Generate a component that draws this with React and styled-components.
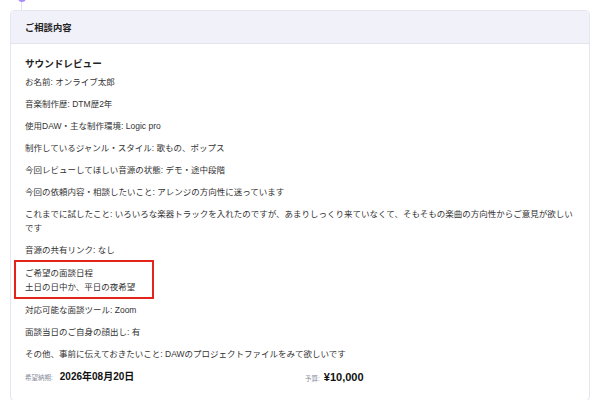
import React from "react";
import styled, { createGlobalStyle } from "styled-components";

const GlobalStyle = createGlobalStyle`
  body {
    margin: 0;
    background: #fff;
    font-family: "Liberation Sans", "Noto Sans CJK JP", sans-serif;
    color: #333;
  }
`;

const Page = styled.div`
  padding: 0 10px;
`;

const Connector = styled.div`
  position: relative;
  width: 1px;
  height: 10px;
  margin-left: 11px;
  background: #e2e2ec;

  &::before {
    content: "";
    position: absolute;
    top: -6px;
    left: -3.5px;
    width: 8px;
    height: 8px;
    border-radius: 50%;
    background: #a78bfa;
  }
`;

const Card = styled.section`
  border: 1px solid #e6e6f0;
  border-radius: 4px;
  overflow: hidden;
`;

const CardHeader = styled.header`
  display: flex;
  align-items: center;
  height: 32px;
  padding: 0 14px;
  background: #f1f1fa;
  border-bottom: 1px solid #e4e4f0;
  font-size: 9.3px;
  font-weight: 700;
  color: #222;
`;

const CardBody = styled.div`
  display: flex;
  flex-direction: column;
  gap: 8px;
  padding: 12px 14px 13px;
`;

const Title = styled.h3`
  margin: 0 0 -5px;
  font-size: 9.6px;
  line-height: 16px;
  font-weight: 700;
  color: #222;
`;

const Item = styled.p`
  position: relative;
  margin: ${(p) => (p.$marked ? "1px 0" : "0")};
  font-size: 8.5px;
  line-height: 14px;
  color: #333;
  white-space: pre-line;
`;

const Marker = styled.span`
  position: absolute;
  top: -6px;
  left: -11px;
  width: 140px;
  height: 39px;
  box-sizing: border-box;
  border: 2px solid #e3241b;
`;

const Summary = styled.div`
  display: grid;
  grid-template-columns: 1fr 1fr;
  gap: 10px;
  line-height: 16px;
`;

const SummaryCell = styled.div`
  display: flex;
  align-items: baseline;
`;

const SummaryLabel = styled.span`
  margin-right: ${(p) => (p.$tight ? "4px" : "7px")};
  font-size: 6.5px;
  color: #8a8fa0;
`;

const SummaryValue = styled.span`
  font-size: ${(p) => (p.$large ? "11px" : "10px")};
  font-weight: 700;
  color: #111;
`;

const items = [
  "お名前: オンライブ太郎",
  "音楽制作歴: DTM歴2年",
  "使用DAW・主な制作環境: Logic pro",
  "制作しているジャンル・スタイル: 歌もの、ポップス",
  "今回レビューしてほしい音源の状態: デモ・途中段階",
  "今回の依頼内容・相談したいこと: アレンジの方向性に迷っています",
  "これまでに試したこと: いろいろな楽器トラックを入れたのですが、あまりしっくり来ていなくて、そもそもの楽曲の方向性からご意見が欲しいです",
  "音源の共有リンク: なし",
  { text: "ご希望の面談日程\n土日の日中か、平日の夜希望", marked: true },
  "対応可能な面談ツール: Zoom",
  "面談当日のご自身の顔出し: 有",
  "その他、事前に伝えておきたいこと: DAWのプロジェクトファイルをみて欲しいです",
];

const App = () => {
  return (
    <Page>
      <GlobalStyle />
      <Connector />
      <Card>
        <CardHeader>ご相談内容</CardHeader>
        <CardBody>
          <Title>サウンドレビュー</Title>
          {items.map((it, i) =>
            typeof it === "string" ? (
              <Item key={i}>{it}</Item>
            ) : (
              <Item key={i} $marked>
                {it.text}
                <Marker />
              </Item>
            )
          )}
          <Summary>
            <SummaryCell>
              <SummaryLabel>希望納期:</SummaryLabel>
              <SummaryValue>2026年08月20日</SummaryValue>
            </SummaryCell>
            <SummaryCell>
              <SummaryLabel $tight>予算:</SummaryLabel>
              <SummaryValue $large>¥10,000</SummaryValue>
            </SummaryCell>
          </Summary>
        </CardBody>
      </Card>
    </Page>
  );
};

export default App;
